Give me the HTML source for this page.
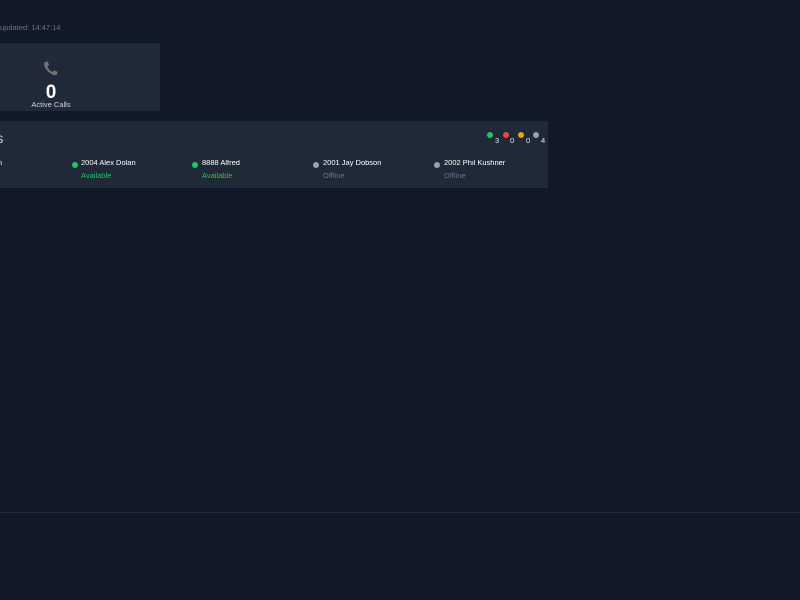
<!DOCTYPE html>
<html><head><style>
body{margin:0;width:800px;height:600px;background:#111827;font-family:"Liberation Sans",sans-serif;position:relative;overflow:hidden}
.a{position:absolute}
.card{left:0;top:43px;width:160px;height:68px;background:#1f2937}
.panel{left:0;top:121px;width:548px;height:67px;background:#1f2937}
.dot{position:absolute;width:6px;height:6px;border-radius:50%}
.clip{position:absolute;top:160px;height:7px;overflow:hidden;width:110px}
.nm{font-size:7.5px;color:#fff;margin-top:-2px;white-space:nowrap}
.st{position:absolute;top:171px;font-size:7.5px}
.lg{position:absolute;top:136px;font-size:7.5px;color:#e5e7eb}
</style></head><body>
<div class="a" style="left:0;top:23px;font-size:7.5px;color:#6b7280">updated: 14:47:14</div>
<div class="a card"></div>
<svg class="a" style="left:42px;top:60px" width="17" height="17" viewBox="0 0 24 24"><path d="M4 3 L8 2 L10 7 L7.5 9 Q10 15 15 17 L17 14.5 L22 16.5 L21 20.5 Q19 22 16 21 Q6 17 3 7 Q2.5 4 4 3Z" fill="#78716c"/></svg>
<div class="a" style="left:0;width:102px;text-align:center;top:82px;font-size:19px;font-weight:bold;color:#fff">0</div>
<div class="a" style="left:0;width:102px;text-align:center;top:100px;font-size:7.5px;color:#d1d5db">Active Calls</div>
<div class="a panel"></div>
<div class="a" style="left:-4px;top:134px;font-size:11px;color:#e5e7eb">S</div>
<div class="dot" style="left:487px;top:132px;background:#22c55e"></div><span class="lg" style="left:495px">3</span>
<div class="dot" style="left:503px;top:132px;background:#ef4444"></div><span class="lg" style="left:510px">0</span>
<div class="dot" style="left:518px;top:132px;background:#f59e0b"></div><span class="lg" style="left:526px">0</span>
<div class="dot" style="left:533px;top:132px;background:#9ca3af"></div><span class="lg" style="left:541px">4</span>
<div class="clip" style="left:0"><div class="nm" style="margin-left:-8px">lan</div></div>
<div class="dot" style="left:72px;top:162px;background:#22c55e"></div>
<div class="clip" style="left:81px"><div class="nm">2004 Alex Dolan</div></div>
<div class="st" style="left:81px;color:#22c55e">Available</div>
<div class="dot" style="left:192px;top:162px;background:#22c55e"></div>
<div class="clip" style="left:202px"><div class="nm">8888 Alfred</div></div>
<div class="st" style="left:202px;color:#22c55e">Available</div>
<div class="dot" style="left:313px;top:162px;background:#9ca3af"></div>
<div class="clip" style="left:323px"><div class="nm">2001 Jay Dobson</div></div>
<div class="st" style="left:323px;color:#6b7280">Offline</div>
<div class="dot" style="left:434px;top:162px;background:#9ca3af"></div>
<div class="clip" style="left:444px"><div class="nm">2002 Phil Kushner</div></div>
<div class="st" style="left:444px;color:#6b7280">Offline</div>
<div class="a" style="left:0;top:512px;width:800px;height:1px;background:#2b2a33"></div>
</body></html>
